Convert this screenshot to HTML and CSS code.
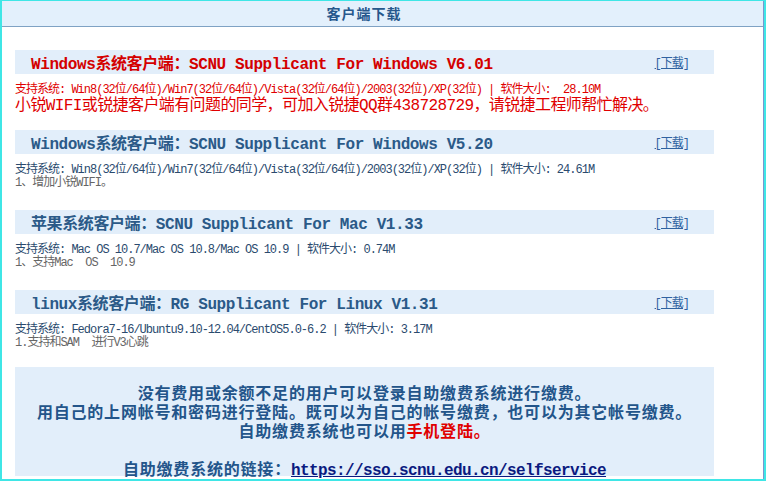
FILE: index.html
```html
<!DOCTYPE html>
<html lang="zh-CN">
<head>
<meta charset="utf-8">
<title>客户端下载</title>
<link rel="stylesheet" href="styles.css">
</head>
<body>
<div class="frame">
  <div class="panel">
    <div class="head">客户端下载</div>
    <div class="content">
      <div class="item">
        <div class="bar">
          <span class="title red">Windows系统客户端：SCNU Supplicant For Windows V6.01</span>
          <a class="dl" href="#">[下载]</a>
        </div>
        <div class="sys redtxt">支持系统: Win8(32位/64位)/Win7(32位/64位)/Vista(32位/64位)/2003(32位)/XP(32位) | 软件大小:&nbsp; 28.10M</div>
        <div class="warn">小锐WIFI或锐捷客户端有问题的同学，可加入锐捷QQ群438728729，请锐捷工程师帮忙解决。</div>
      </div>
      <div class="item">
        <div class="bar">
          <span class="title">Windows系统客户端：SCNU Supplicant For Windows V5.20</span>
          <a class="dl" href="#">[下载]</a>
        </div>
        <div class="sys">支持系统: Win8(32位/64位)/Win7(32位/64位)/Vista(32位/64位)/2003(32位)/XP(32位) | 软件大小: 24.61M</div>
        <div class="note">1、增加小锐WIFI。</div>
      </div>
      <div class="item">
        <div class="bar">
          <span class="title">苹果系统客户端：SCNU Supplicant For Mac V1.33</span>
          <a class="dl" href="#">[下载]</a>
        </div>
        <div class="sys">支持系统: Mac OS 10.7/Mac OS 10.8/Mac OS 10.9 | 软件大小: 0.74M</div>
        <div class="note">1、支持Mac&nbsp; OS&nbsp; 10.9</div>
      </div>
      <div class="item short">
        <div class="bar">
          <span class="title">linux系统客户端：RG Supplicant For Linux V1.31</span>
          <a class="dl" href="#">[下载]</a>
        </div>
        <div class="sys">支持系统: Fedora7-16/Ubuntu9.10-12.04/CentOS5.0-6.2 | 软件大小: 3.17M</div>
        <div class="note">1.支持和SAM&nbsp; 进行V3心跳</div>
      </div>
      <div class="pay">
        <div>没有费用或余额不足的用户可以登录自助缴费系统进行缴费。</div>
        <div>用自己的上网帐号和密码进行登陆。既可以为自己的帐号缴费，也可以为其它帐号缴费。</div>
        <div>自助缴费系统也可以用<span class="hot">手机登陆。</span></div>
        <div>&nbsp;</div>
        <div>自助缴费系统的链接：<a class="paylink" href="#">https://sso.scnu.edu.cn/selfservice</a></div>
      </div>
    </div>
  </div>
</div>
</body>
</html>
```

FILE: styles.css
```css
html, body {
  margin: 0;
  padding: 0;
  background: #ffffff;
}

.frame {
  width: 762px;
  height: 478px;
  border-top: 1px solid #3fe6e6;
  border-left: 2px solid #3fe6e6;
  border-right: 2px solid #3fe6e6;
  border-bottom: 2px solid #3fe6e6;
}

.panel {
  height: 478px;
  border-right: 1px solid #7b97cf;
}

.head {
  height: 25px;
  line-height: 25px;
  background: #e3f0fc;
  border-bottom: 1px solid #7fa2c4;
  padding-right: 37px;
  text-align: center;
  color: #27588c;
  font-family: "Noto Sans CJK SC", sans-serif;
  font-size: 14px;
  font-weight: 700;
  letter-spacing: 1px;
}

.content {
  padding: 23px 0 0 13px;
}

.item {
  height: 80px;
}

.item.short {
  height: 77px;
}

.bar {
  width: 699px;
  height: 24px;
  box-sizing: border-box;
  padding: 0 25px 0 16px;
  background: #e2eefa;
  display: flex;
  align-items: center;
  justify-content: space-between;
}

.title {
  font-family: "Liberation Mono", "Noto Sans CJK SC", monospace;
  font-size: 16px;
  font-weight: 700;
  letter-spacing: -0.4px;
  color: #2b5a88;
  white-space: nowrap;
}

.title.red {
  color: #d40000;
}

.dl {
  font-family: "Liberation Mono", "Noto Sans CJK SC", monospace;
  font-size: 12px;
  letter-spacing: -1px;
  color: #2f62a0;
  text-decoration: underline;
}

.sys {
  margin-top: 10px;
  line-height: 13px;
  font-family: "Liberation Mono", "Noto Sans CJK SC", monospace;
  font-size: 12px;
  letter-spacing: -1px;
  color: #2a4a6e;
  white-space: nowrap;
}

.sys.redtxt {
  color: #e00000;
}

.note {
  line-height: 13px;
  font-family: "Liberation Mono", "Noto Sans CJK SC", monospace;
  font-size: 12px;
  letter-spacing: -1px;
  color: #666666;
  white-space: nowrap;
}

.warn {
  line-height: 18px;
  font-family: "Liberation Mono", "Noto Sans CJK SC", monospace;
  font-size: 16px;
  letter-spacing: -0.6px;
  color: #e00000;
  white-space: nowrap;
}

.pay {
  width: 699px;
  height: 109px;
  box-sizing: border-box;
  padding-top: 16px;
  background: #e2eefa;
  text-align: center;
  font-family: "Noto Sans CJK SC", sans-serif;
  font-size: 16px;
  font-weight: 700;
  line-height: 19px;
  letter-spacing: 0.8px;
  color: #23558a;
  white-space: nowrap;
}

.hot {
  color: #e00000;
}

.paylink {
  font-family: "Liberation Mono", monospace;
  font-weight: 700;
  letter-spacing: -0.6px;
  color: #0a1a80;
  text-decoration: underline;
}
```
